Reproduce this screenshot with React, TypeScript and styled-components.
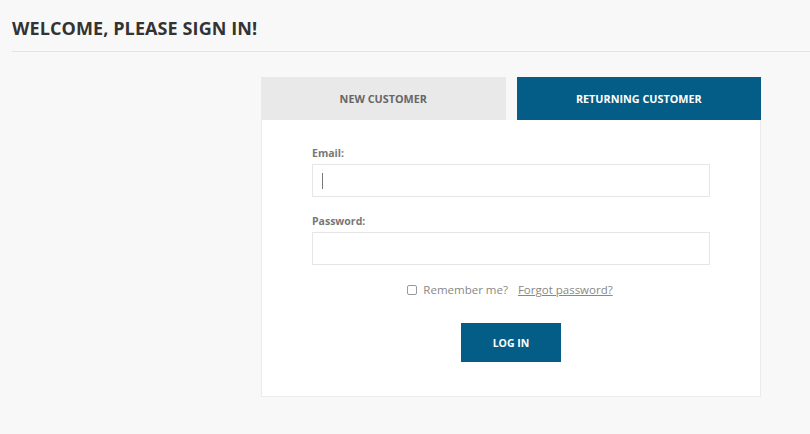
import styled, { createGlobalStyle } from "styled-components";

const GlobalStyle = createGlobalStyle`
  html, body {
    margin: 0;
    padding: 0;
    background: #f8f8f8;
    font-family: "Open Sans", "Liberation Sans", sans-serif;
  }
`;

const Page = styled.div`
  width: 810px;
  height: 434px;
  overflow: hidden;
  display: flex;
  flex-direction: column;
`;

const Title = styled.h1`
  margin: 0 0 0 12px;
  padding: 17px 0 12px;
  font-size: 18px;
  line-height: 22px;
  font-weight: 700;
  color: #333;
  border-bottom: 1px solid #e3e3e3;
  letter-spacing: 0.1px;
`;

const Panel = styled.div`
  width: 500px;
  margin: 25px 0 0 261px;
  display: flex;
  flex-direction: column;
`;

const Tabs = styled.div`
  display: flex;
  gap: 11px;
`;

const Tab = styled.div<{ $active?: boolean }>`
  flex: 1;
  height: 43px;
  display: flex;
  align-items: center;
  justify-content: center;
  font-size: 10.8px;
  font-weight: 700;
  text-transform: uppercase;
  background: ${(p) => (p.$active ? "#045d87" : "#e9e9e9")};
  color: ${(p) => (p.$active ? "#fff" : "#666")};
`;

const Body = styled.div`
  background: #fff;
  border: 1px solid #ebebeb;
  border-top: none;
  height: 277px;
  box-sizing: border-box;
  padding: 26px 50px 0;
  display: flex;
  flex-direction: column;
`;

const Field = styled.div`
  display: flex;
  flex-direction: column;
  margin-bottom: 17px;
`;

const Label = styled.label`
  font-size: 10.5px;
  font-weight: 700;
  color: #777;
  margin-bottom: 4px;
`;

const Input = styled.div`
  width: 398px;
  height: 33px;
  box-sizing: border-box;
  border: 1px solid #e6e6e6;
  background: #fff;
  display: flex;
  align-items: center;
  padding-left: 9px;
`;

const Caret = styled.span`
  width: 1px;
  height: 16px;
  background: #777;
`;

const RememberRow = styled.div`
  display: flex;
  justify-content: center;
  align-items: center;
  gap: 10px;
  padding-right: 2px;
  font-size: 11.5px;
  color: #888;
`;

const Check = styled.span`
  display: flex;
  align-items: center;
  gap: 6px;
`;

const Box = styled.span`
  width: 8px;
  height: 8px;
  border: 1px solid #999;
  border-radius: 2px;
`;

const Link = styled.a`
  color: #888;
  text-decoration: underline;
`;

const Button = styled.button`
  align-self: center;
  margin: 26px 0 0 0;
  width: 100px;
  height: 39px;
  border: none;
  background: #045d87;
  color: #fff;
  font-family: inherit;
  font-size: 10.5px;
  font-weight: 700;
  text-transform: uppercase;
`;

export default function App() {
  return (
    <Page>
      <GlobalStyle />
      <Title>WELCOME, PLEASE SIGN IN!</Title>
      <Panel>
        <Tabs>
          <Tab>New Customer</Tab>
          <Tab $active>Returning Customer</Tab>
        </Tabs>
        <Body>
          <Field>
            <Label>Email:</Label>
            <Input>
              <Caret />
            </Input>
          </Field>
          <Field>
            <Label>Password:</Label>
            <Input />
          </Field>
          <RememberRow>
            <Check>
              <Box />
              Remember me?
            </Check>
            <Link>Forgot password?</Link>
          </RememberRow>
          <Button>Log in</Button>
        </Body>
      </Panel>
    </Page>
  );
}
